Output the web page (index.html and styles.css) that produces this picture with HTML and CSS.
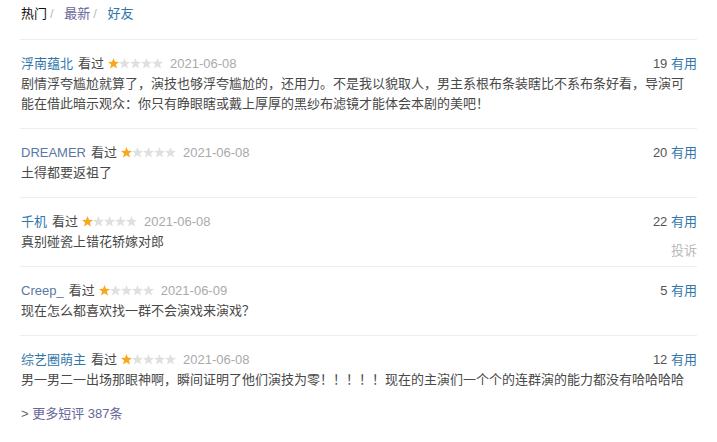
FILE: index.html
```html
<!DOCTYPE html>
<html lang="zh-CN">
<head>
  <meta charset="UTF-8">
  <meta name="viewport" content="width=device-width, initial-scale=1.0">
  <title>短评</title>
  <link rel="stylesheet" href="styles.css">
</head>
<body>
  <div class="comments-section">
    <div class="tabs">
      <span class="tab current">热门</span><span class="sep">/</span>
      <a class="tab visited" href="#">最新</a><span class="sep">/</span>
      <a class="tab" href="#">好友</a>
    </div>

    <div class="comment-item">
      <div class="comment-info">
        <a class="user" href="#">浮南蕴北</a>
        <span class="watched">看过</span>
        <span class="rating">
          <svg width="55" height="11" viewBox="0 0 55 11"><use href="#star" x="0" class="on"/><use href="#star" x="11"/><use href="#star" x="22"/><use href="#star" x="33"/><use href="#star" x="44"/></svg>
        </span>
        <span class="date">2021-06-08</span>
        <span class="votes"><span class="count">19</span> <a href="#">有用</a></span>
      </div>
      <p class="short">剧情浮夸尴尬就算了，演技也够浮夸尴尬的，还用力。不是我以貌取人，男主系根布条装瞎比不系布条好看，导演可能在借此暗示观众：你只有睁眼瞎或戴上厚厚的黑纱布滤镜才能体会本剧的美吧！</p>
    </div>

    <div class="comment-item">
      <div class="comment-info">
        <a class="user visited" href="#">DREAMER</a>
        <span class="watched">看过</span>
        <span class="rating">
          <svg width="55" height="11" viewBox="0 0 55 11"><use href="#star" x="0" class="on"/><use href="#star" x="11"/><use href="#star" x="22"/><use href="#star" x="33"/><use href="#star" x="44"/></svg>
        </span>
        <span class="date">2021-06-08</span>
        <span class="votes"><span class="count">20</span> <a href="#">有用</a></span>
      </div>
      <p class="short">土得都要返祖了</p>
    </div>

    <div class="comment-item">
      <div class="comment-info">
        <a class="user" href="#">千机</a>
        <span class="watched">看过</span>
        <span class="rating">
          <svg width="55" height="11" viewBox="0 0 55 11"><use href="#star" x="0" class="on"/><use href="#star" x="11"/><use href="#star" x="22"/><use href="#star" x="33"/><use href="#star" x="44"/></svg>
        </span>
        <span class="date">2021-06-08</span>
        <span class="votes"><span class="count">22</span> <a href="#">有用</a></span>
      </div>
      <p class="short">真别碰瓷上错花轿嫁对郎</p>
      <a class="report" href="#">投诉</a>
    </div>

    <div class="comment-item">
      <div class="comment-info">
        <a class="user visited" href="#">Creep_</a>
        <span class="watched">看过</span>
        <span class="rating">
          <svg width="55" height="11" viewBox="0 0 55 11"><use href="#star" x="0" class="on"/><use href="#star" x="11"/><use href="#star" x="22"/><use href="#star" x="33"/><use href="#star" x="44"/></svg>
        </span>
        <span class="date">2021-06-09</span>
        <span class="votes"><span class="count">5</span> <a href="#">有用</a></span>
      </div>
      <p class="short">现在怎么都喜欢找一群不会演戏来演戏？</p>
    </div>

    <div class="comment-item last">
      <div class="comment-info">
        <a class="user" href="#">综艺圈萌主</a>
        <span class="watched">看过</span>
        <span class="rating">
          <svg width="55" height="11" viewBox="0 0 55 11"><use href="#star" x="0" class="on"/><use href="#star" x="11"/><use href="#star" x="22"/><use href="#star" x="33"/><use href="#star" x="44"/></svg>
        </span>
        <span class="date">2021-06-08</span>
        <span class="votes"><span class="count">12</span> <a href="#">有用</a></span>
      </div>
      <p class="short">男一男二一出场那眼神啊，瞬间证明了他们演技为零！！！！！现在的主演们一个个的连群演的能力都没有哈哈哈哈</p>
    </div>

    <p class="more"><span class="arrow">&gt;</span> <a href="#">更多短评 387条</a></p>
  </div>

  <svg width="0" height="0" class="defs">
    <defs>
      <polygon id="star" points="5.5,0 7,3.8 11,4 7.9,6.5 9,10.6 5.5,8.3 2,10.6 3.1,6.5 0,4 4,3.8"/>
    </defs>
  </svg>
</body>
</html>
```

FILE: styles.css
```css
body {
  margin: 0;
  padding: 0;
  background: #fff;
  font-family: 'Liberation Sans', 'Noto Sans CJK SC', sans-serif;
  font-size: 13px;
  color: #494949;
}

a {
  color: #37a;
  text-decoration: none;
}

.comments-section {
  padding: 0 20px;
}

.tabs {
  padding: 4px 0 15px 1px;
  line-height: 20px;
  border-bottom: 1px solid #eee;
}

.tab.current {
  color: #111;
}

.tab.visited {
  color: #669;
}

.sep {
  color: #bbb;
  margin: 0 7px 0 3px;
}

.comment-item {
  position: relative;
  padding: 13px 0 14px 1px;
  border-bottom: 1px solid #eee;
}

.comment-item.last {
  border-bottom: none;
}

.comment-info {
  display: flex;
  align-items: center;
  height: 21px;
  line-height: 21px;
}

.user {
  color: #37a;
}

.user.visited {
  color: #5a77a6;
}

.watched {
  color: #494949;
  margin-left: 5px;
}

.rating {
  display: flex;
  margin: 0 7px 0 4px;
}

.rating svg use {
  fill: #e0e0e0;
}

.rating svg use.on {
  fill: #f7a81e;
}

.date {
  color: #aaa;
}

.votes {
  margin-left: auto;
  white-space: pre;
}

.count {
  color: #555;
}

.short {
  margin: 0;
  padding-right: 7px;
  line-height: 20px;
  color: #494949;
}

.report {
  position: absolute;
  right: 0;
  top: 43px;
  line-height: 20px;
  color: #bbb;
}

.more {
  margin: 0;
  padding-left: 1px;
  line-height: 20px;
  color: #666;
}

.more a {
  color: #669;
}

.defs {
  position: absolute;
}
```
